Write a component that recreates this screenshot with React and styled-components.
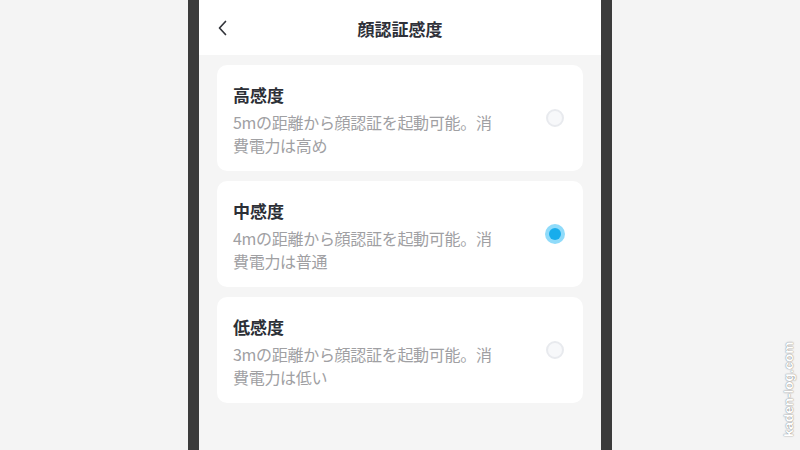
import React from "react"
import styled, { createGlobalStyle } from "styled-components"

const GlobalStyle = createGlobalStyle`
  html, body {
    margin: 0;
    padding: 0;
    background: #f4f4f4;
    font-family: "Noto Sans CJK JP", "Noto Sans", sans-serif;
  }
`

const Page = styled.div`
  position: relative;
  width: 800px;
  height: 450px;
  overflow: hidden;
  display: flex;
  justify-content: center;
  background: #f4f4f4;
`

const Phone = styled.div`
  width: 402px;
  height: 450px;
  border-left: 11px solid #3b3b3b;
  border-right: 11px solid #3b3b3b;
  background: #f5f5f5;
  display: flex;
  flex-direction: column;
`

const Header = styled.div`
  height: 55px;
  background: #ffffff;
  display: flex;
  align-items: center;
  justify-content: center;
  position: relative;
`

const BackButton = styled.div`
  position: absolute;
  left: 18px;
  top: 20px;
  width: 12px;
  height: 16px;
  display: flex;
`

const HeaderTitle = styled.h1`
  margin: 0;
  font-size: 17px;
  font-weight: 700;
  color: #2e3038;
  line-height: 24px;
  padding-top: 2px;
`

const List = styled.div`
  display: flex;
  flex-direction: column;
  gap: 10px;
  padding: 10px 18px;
`

const Card = styled.div`
  height: 106px;
  box-sizing: border-box;
  background: #ffffff;
  border-radius: 10px;
  padding: 18px 18px 14px 16px;
  display: flex;
  align-items: center;
  justify-content: space-between;
`

const TextBlock = styled.div`
  display: flex;
  flex-direction: column;
  align-self: flex-start;
`

const Title = styled.div`
  font-size: 17px;
  font-weight: 700;
  line-height: 24px;
  color: #2c2f36;
`

const Description = styled.div`
  margin-top: 4px;
  width: 264px;
  font-size: 16px;
  letter-spacing: -0.3px;
  line-height: 23px;
  color: #a0a0a3;
`

const Radio = styled.div`
  box-sizing: border-box;
  width: ${p => (p.checked ? "20px" : "18px")};
  height: ${p => (p.checked ? "20px" : "18px")};
  margin: 0 ${p => (p.checked ? "0" : "1px")} 4px 0;
  border-radius: 50%;
  border: ${p => (p.checked ? "none" : "2px solid #e8eaee")};
  background: ${p => (p.checked ? "#8fdbfa" : "#f7f8fa")};
  display: flex;
  align-items: center;
  justify-content: center;
  &::after {
    content: "";
    display: ${p => (p.checked ? "block" : "none")};
    width: 12px;
    height: 12px;
    border-radius: 50%;
    background: #18adec;
  }
`

const Watermark = styled.div`
  position: absolute;
  right: 4px;
  bottom: 13px;
  transform-origin: right bottom;
  transform: rotate(-90deg) translateX(100%);
  font-family: "Liberation Sans", Arial, sans-serif;
  font-size: 13.5px;
  font-weight: 700;
  color: #ffffff;
  text-shadow: 0 0 1px rgba(0, 0, 0, 0.45), 0 0 2px rgba(0, 0, 0, 0.25);
  white-space: nowrap;
`

const options = [
  { title: "高感度", desc: "5mの距離から顔認証を起動可能。消費電力は高め", checked: false },
  { title: "中感度", desc: "4mの距離から顔認証を起動可能。消費電力は普通", checked: true },
  { title: "低感度", desc: "3mの距離から顔認証を起動可能。消費電力は低い", checked: false },
]

const App = () => {
  return (
    <>
      <GlobalStyle />
      <Page>
        <Phone>
          <Header>
            <BackButton>
              <svg width="12" height="16" viewBox="0 0 12 16">
                <path d="M8.5 1.5 L2.5 8 L8.5 14.5" fill="none" stroke="#33353b" strokeWidth="1.7" strokeLinecap="round" strokeLinejoin="round" />
              </svg>
            </BackButton>
            <HeaderTitle>顔認証感度</HeaderTitle>
          </Header>
          <List>
            {options.map(o => (
              <Card key={o.title}>
                <TextBlock>
                  <Title>{o.title}</Title>
                  <Description>{o.desc}</Description>
                </TextBlock>
                <Radio checked={o.checked} />
              </Card>
            ))}
          </List>
        </Phone>
        <Watermark>kaden-log.com</Watermark>
      </Page>
    </>
  )
}

export default App
